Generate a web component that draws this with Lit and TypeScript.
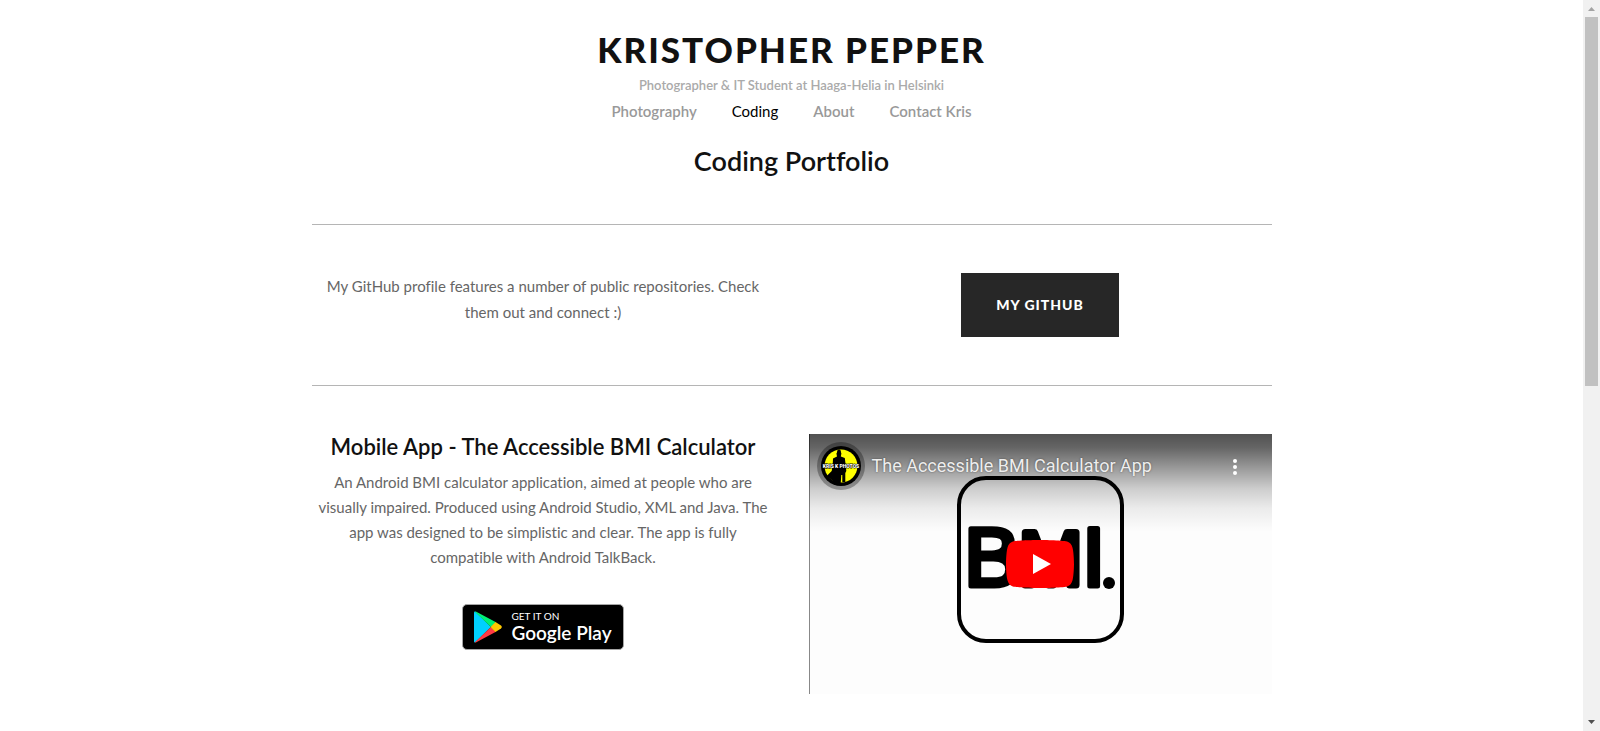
import { LitElement, html, css } from "lit";
import { customElement } from "lit/decorators.js";

@customElement("video-card")
class VideoCard extends LitElement {
  static styles = css`
    :host {
      display: block;
    }
    .player {
      position: relative;
      aspect-ratio: 463 / 260;
      background: #fdfdfd;
      overflow: hidden;
    }
    .poster {
      display: block;
      width: 100%;
      height: 100%;
    }
    .shade {
      position: absolute;
      inset: 0 0 auto 0;
      height: 98px;
      background: linear-gradient(
        rgba(0, 0, 0, 0.68) 0%,
        rgba(0, 0, 0, 0.6) 14%,
        rgba(0, 0, 0, 0.38) 36%,
        rgba(0, 0, 0, 0.19) 56%,
        rgba(0, 0, 0, 0.07) 76%,
        rgba(0, 0, 0, 0) 100%
      );
    }
    .bar {
      position: absolute;
      inset: 8px 25px auto 8px;
      display: flex;
      align-items: center;
      gap: 7px;
    }
    .avatar {
      display: block;
      width: 48px;
      height: 48px;
      flex: none;
    }
    .title {
      flex: 1;
      font: 400 18px/24px Roboto, sans-serif;
      color: #eee;
      text-align: left;
      text-decoration: none;
      text-shadow: 0 0 2px rgba(0, 0, 0, 0.5);
      white-space: nowrap;
    }
    .more,
    .play {
      padding: 0;
      border: 0;
      background: none;
      cursor: pointer;
    }
    .more svg,
    .play svg {
      display: block;
    }
    .play {
      position: absolute;
      inset: 0;
      margin: auto;
      width: 68px;
      height: 48px;
    }
  `;

  render() {
    return html`
      <div class="player">
        <svg class="poster" viewBox="0 0 463 260" role="img" aria-label="BMI app logo">
          <rect x="0" y="0" width="1" height="260" fill="#888" />
          <rect x="150" y="44" width="163" height="163" rx="27" fill="none" stroke="#000" stroke-width="4" />
          <g
            font-family="'Liberation Sans', sans-serif"
            font-weight="400"
            stroke="#000"
            stroke-linejoin="round"
          >
            <text x="155" y="152" font-size="84" stroke-width="5">B</text>
            <text x="210" y="151" font-size="76" stroke-width="7">M</text>
            <text x="273" y="152" font-size="84" stroke-width="5">I</text>
          </g>
          <circle cx="300" cy="149" r="6" />
        </svg>
        <div class="shade"></div>
        <div class="bar">
          <svg class="avatar" viewBox="0 0 48 48" aria-hidden="true">
            <circle cx="24" cy="24" r="24" fill="#000" opacity=".3" />
            <circle cx="24" cy="24" r="20" />
            <circle cx="24" cy="24" r="16.500" fill="#ff0" />
            <path
              d="M19.500 12q-.3-1 .5-1.500 0-3 2-3t2 3q.6.6.3 1.500l-.5 2.500 4 1.500 1 8 .5 5-1 2v9h-3v-7h-1l-.6 8.500-6-1-8-6.500 5-5 1-6 .3-6.500 4-2z"
            />
            <text
              x="24"
              y="26"
              text-anchor="middle"
              font-family="Roboto, sans-serif"
              font-weight="900"
              font-size="5"
              fill="#fff"
              stroke="#000"
              stroke-width="1"
              paint-order="stroke"
            >KRIS K PHOTOS</text>
          </svg>
          <a class="title" href="#video">The Accessible BMI Calculator App</a>
          <button class="more" aria-label="More options">
            <svg width="24" height="24" viewBox="0 0 24 24" fill="#fff">
              <circle cx="12" cy="7" r="2" />
              <circle cx="12" cy="13" r="2" />
              <circle cx="12" cy="19" r="2" />
            </svg>
          </button>
        </div>
        <button class="play" aria-label="Play">
          <svg width="68" height="48" viewBox="0 0 68 48">
            <path
              fill="#f00"
              d="M66.520 7.740c-.78-2.930-2.490-5.410-5.420-6.190C55.790.130 34 0 34 0S12.210.130 6.900 1.550C3.970 2.330 2.270 4.810 1.480 7.740.060 13.050 0 24 0 24s.060 10.950 1.480 16.260c.78 2.930 2.490 5.410 5.420 6.190C12.210 47.870 34 48 34 48s21.790-.130 27.100-1.550c2.930-.78 4.640-3.260 5.420-6.190C67.940 34.950 68 24 68 24s-.060-10.950-1.480-16.260z"
            />
            <path d="M45 24 27 14v20" fill="#fff" />
          </svg>
        </button>
      </div>
    `;
  }
}

@customElement("play-badge")
class PlayBadge extends LitElement {
  static styles = css`
    :host {
      display: block;
    }
    .badge {
      display: flex;
      align-items: center;
      gap: 9px;
      box-sizing: border-box;
      height: 46px;
      padding: 0 11px;
      border: 1px solid #a6a6a6;
      border-radius: 5px;
      background: #000;
      color: #fff;
      text-align: left;
      text-decoration: none;
      font-family: Lato, sans-serif;
      white-space: nowrap;
    }
    .logo {
      display: block;
      width: 28px;
      height: 32px;
    }
    .words {
      display: grid;
    }
    .small {
      font-size: 10px;
      line-height: 12px;
    }
    .large {
      font-size: 19px;
      line-height: 22px;
      font-weight: 600;
    }
  `;

  render() {
    return html`
      <a class="badge" href="#google-play">
        <svg class="logo" viewBox="0 0 28 32" aria-hidden="true">
          <path fill="#00d0ff" d="M0 1.500Q0 .5 1 .4L17 16 1 31.600Q0 31.500 0 30.500z" />
          <path fill="#00f076" d="M.6.6Q1.400.2 2.300.7L22 11.300 17 16z" />
          <path fill="#ff3a44" d="M.6 31.400Q1.400 31.800 2.300 31.300L22 20.700 17 16z" />
          <path fill="#ffc900" d="M21.500 11l5.500 3.500q1.600 1.500 0 3L21.500 21 16.500 16z" />
        </svg>
        <span class="words">
          <span class="small">GET IT ON</span>
          <span class="large">Google Play</span>
        </span>
      </a>
    `;
  }
}

const links = [
  { label: "Photography", active: false },
  { label: "Coding", active: true },
  { label: "About", active: false },
  { label: "Contact Kris", active: false },
];

@customElement("app-root")
class AppRoot extends LitElement {
  static styles = css`
    :host {
      display: flex;
      height: 100vh;
      background: #fff;
      font-family: Lato, sans-serif;
      font-variant-ligatures: none;
      color: #111;
    }
    .page {
      flex: 1;
      min-width: 0;
      overflow: hidden;
      display: flex;
      flex-direction: column;
      align-items: center;
      text-align: center;
    }
    .header {
      display: flex;
      flex-direction: column;
      align-items: center;
      padding-top: 27px;
    }
    .name {
      margin: 0;
      font-size: 35px;
      line-height: 44px;
      font-weight: 900;
      letter-spacing: 2px;
    }
    .tagline {
      margin: 5px 0 0;
      font-size: 13px;
      line-height: 18px;
      font-weight: 600;
      color: #aaa;
    }
    .nav {
      display: flex;
      gap: 35px;
      margin-top: 8px;
      font-size: 15px;
      line-height: 18px;
      font-weight: 600;
    }
    .link {
      color: #999;
      text-decoration: none;
    }
    .link.active {
      color: #000;
      font-weight: 400;
    }
    .content {
      width: 100%;
      max-width: 960px;
    }
    .heading {
      margin: 24px 0 47px;
      font-size: 27px;
      line-height: 33px;
      font-weight: 600;
    }
    .row {
      display: grid;
      grid-template-columns: 1fr 1fr;
      gap: 34px;
      padding: 48px 0;
      border-top: 1px solid #b5b5b5;
    }
    .text {
      margin: 0;
      font-size: 15px;
      line-height: 25px;
      color: #666;
    }
    .text.intro {
      line-height: 26px;
    }
    .cta {
      justify-self: center;
      padding: 0 35px;
      font-size: 14px;
      line-height: 64px;
      font-weight: 900;
      letter-spacing: 1px;
      color: #fff;
      background: #272727;
      text-decoration: none;
    }
    .subheading {
      margin: 0 0 11px;
      font-size: 22px;
      line-height: 25px;
      font-weight: 600;
    }
    .store {
      display: inline-block;
      margin-top: 34px;
    }
    .scrollbar {
      flex: none;
      box-sizing: border-box;
      width: 17px;
      padding: 7px 2px;
      display: flex;
      flex-direction: column;
      align-items: center;
      background: #f1f1f1;
    }
    .arrow {
      display: block;
      width: 7px;
      height: 4px;
    }
    .track {
      flex: 1;
      align-self: stretch;
      padding: 6px 0;
    }
    .thumb {
      height: 53%;
      background: #c1c1c1;
    }
  `;

  render() {
    return html`
      <div class="page">
        <header class="header">
          <h1 class="name">KRISTOPHER PEPPER</h1>
          <p class="tagline">Photographer &amp; IT Student at Haaga-Helia in Helsinki</p>
          <nav class="nav">
            ${links.map(
              (l) => html`<a class="link ${l.active ? "active" : ""}" href="#">${l.label}</a>`
            )}
          </nav>
        </header>
        <main class="content">
          <h2 class="heading">Coding Portfolio</h2>
          <section class="row">
            <p class="text intro">
              My GitHub profile features a number of public repositories. Check<br />them out and
              connect :)
            </p>
            <a class="cta" href="#github">MY GITHUB</a>
          </section>
          <section class="row">
            <div>
              <h3 class="subheading">Mobile App - The Accessible BMI Calculator</h3>
              <p class="text">
                An Android BMI calculator application, aimed at people who are<br />visually
                impaired. Produced using Android Studio, XML and Java. The<br />app was designed to
                be simplistic and clear. The app is fully<br />compatible with Android TalkBack.
              </p>
              <play-badge class="store"></play-badge>
            </div>
            <video-card></video-card>
          </section>
        </main>
      </div>
      <div class="scrollbar" aria-hidden="true">
        <svg class="arrow" viewBox="0 0 7 4"><path fill="#a3a3a3" d="M0 4 3.500 0 7 4z" /></svg>
        <div class="track"><div class="thumb"></div></div>
        <svg class="arrow" viewBox="0 0 7 4"><path fill="#505050" d="M0 0h7L3.500 4z" /></svg>
      </div>
    `;
  }
}
